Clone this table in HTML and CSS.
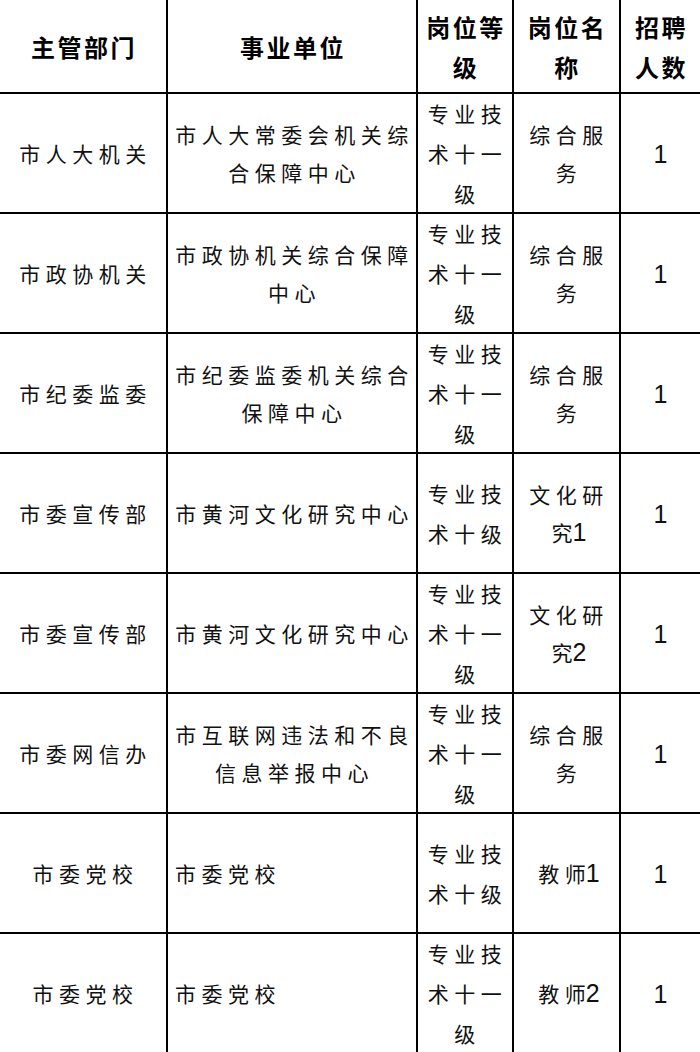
FILE: index.html
```html
<!DOCTYPE html>
<html lang="zh-CN">
<head>
<meta charset="utf-8">
<title>招聘岗位表</title>
<link rel="stylesheet" href="styles.css">
</head>
<body>
<div class="table" role="table">
  <div class="cell head"><span>主管部门</span></div>
  <div class="cell head"><span>事业单位</span></div>
  <div class="cell head"><span>岗位等级</span></div>
  <div class="cell head"><span>岗位名称</span></div>
  <div class="cell head c5"><span>招聘人数</span></div>

  <div class="cell"><span>市人大机关</span></div>
  <div class="cell unit"><span>市人大常委会机关综合保障中心</span></div>
  <div class="cell lv"><span>专业技术十一级</span></div>
  <div class="cell nm"><span>综合服务</span></div>
  <div class="cell c5 num"><span>1</span></div>

  <div class="cell"><span>市政协机关</span></div>
  <div class="cell unit"><span>市政协机关综合保障中心</span></div>
  <div class="cell lv"><span>专业技术十一级</span></div>
  <div class="cell nm"><span>综合服务</span></div>
  <div class="cell c5 num"><span>1</span></div>

  <div class="cell"><span>市纪委监委</span></div>
  <div class="cell unit"><span>市纪委监委机关综合保障中心</span></div>
  <div class="cell lv"><span>专业技术十一级</span></div>
  <div class="cell nm"><span>综合服务</span></div>
  <div class="cell c5 num"><span>1</span></div>

  <div class="cell"><span>市委宣传部</span></div>
  <div class="cell unit"><span>市黄河文化研究中心</span></div>
  <div class="cell lv"><span>专业技术十级</span></div>
  <div class="cell nm"><span>文化研<span class="pair">究<span class="digit">1</span></span></span></div>
  <div class="cell c5 num"><span>1</span></div>

  <div class="cell"><span>市委宣传部</span></div>
  <div class="cell unit"><span>市黄河文化研究中心</span></div>
  <div class="cell lv"><span>专业技术十一级</span></div>
  <div class="cell nm"><span>文化研<span class="pair">究<span class="digit">2</span></span></span></div>
  <div class="cell c5 num"><span>1</span></div>

  <div class="cell"><span>市委网信办</span></div>
  <div class="cell unit"><span>市互联网违法和不良信息举报中心</span></div>
  <div class="cell lv"><span>专业技术十一级</span></div>
  <div class="cell nm"><span>综合服务</span></div>
  <div class="cell c5 num"><span>1</span></div>

  <div class="cell"><span>市委党校</span></div>
  <div class="cell unit left"><span>市委党校</span></div>
  <div class="cell lv"><span>专业技术十级</span></div>
  <div class="cell nm"><span>教<span class="pair">师<span class="digit">1</span></span></span></div>
  <div class="cell c5 num"><span>1</span></div>

  <div class="cell"><span>市委党校</span></div>
  <div class="cell unit left"><span>市委党校</span></div>
  <div class="cell lv"><span>专业技术十一级</span></div>
  <div class="cell nm"><span>教<span class="pair">师<span class="digit">2</span></span></span></div>
  <div class="cell c5 num"><span>1</span></div>
</div>
</body>
</html>
```

FILE: styles.css
```css
html, body {
  margin: 0;
  padding: 0;
  background: #ffffff;
}

body {
  width: 700px;
  height: 1052px;
  overflow: hidden;
  font-family: "Noto Sans CJK SC", "Noto Sans", sans-serif;
  color: #111111;
}

.table {
  display: grid;
  grid-template-columns: 168px 250px 96px 107px 79px;
  grid-template-rows: 94px repeat(8, 120px);
}

.cell {
  box-sizing: border-box;
  display: flex;
  align-items: center;
  justify-content: center;
  text-align: center;
  border-right: 2px solid #000;
  border-bottom: 2px solid #000;
  font-size: 21px;
  letter-spacing: 5.5px;
  line-height: 38px;
  padding: 0 2px 0 7px;
  overflow: hidden;
}

.c5 {
  border-right: none;
}

.head {
  font-weight: 700;
  font-size: 24px;
  letter-spacing: 2.5px;
  line-height: 40px;
  color: #000;
  padding: 2px 2px 0 4px;
}

.head.c5 {
  padding: 2px 10px 0 12px;
}

.unit {
  padding: 0 1px 0 6px;
}

.unit.left {
  justify-content: flex-start;
  text-align: left;
  padding-left: 7px;
}

.lv {
  line-height: 40px;
  padding: 0 2px 0 7px;
}

.nm {
  padding: 0 8px 0 13px;
}

.pair {
  white-space: nowrap;
  letter-spacing: 0;
}

.digit {
  font-family: "Liberation Sans", "Noto Sans CJK SC", sans-serif;
  letter-spacing: 0;
  font-size: 25px;
  font-weight: 300;
}

.cell.num {
  font-family: "Liberation Sans", "Noto Sans CJK SC", sans-serif;
  font-size: 25px;
  letter-spacing: 0;
  padding: 2px 0 0 0;
}
```
